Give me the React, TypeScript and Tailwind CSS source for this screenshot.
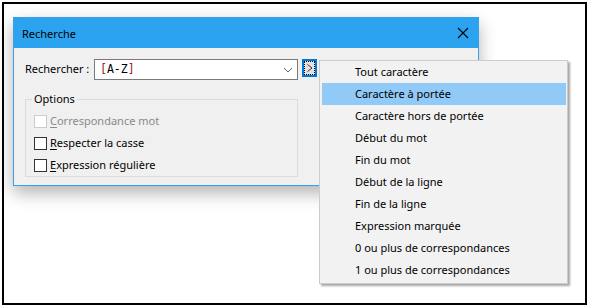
import React from "react";

const MENU_ITEMS = [
  "Tout caractère",
  "Caractère à portée",
  "Caractère hors de portée",
  "Début du mot",
  "Fin du mot",
  "Début de la ligne",
  "Fin de la ligne",
  "Expression marquée",
  "0 ou plus de correspondances",
  "1 ou plus de correspondances",
];

function Checkbox({ label, accel, disabled }: { label: string; accel: string; disabled?: boolean }) {
  return (
    <div className="flex items-center h-[22px]">
      <span
        className={`w-[13px] h-[13px] border bg-white shrink-0 ${disabled ? "border-[#cccccc]" : "border-[#333333]"}`}
      />
      <span className={`ml-[3px] whitespace-nowrap ${disabled ? "text-[#8a8a8a]" : "text-black"}`}>
        <span className="underline underline-offset-2">{accel}</span>
        {label}
      </span>
    </div>
  );
}

export default function App() {
  return (
    <div
      className="w-[589px] h-[307px] bg-white relative overflow-hidden text-[11px] text-black"
      style={{ fontFamily: "'Noto Sans', 'Open Sans', sans-serif" }}
    >
      <div className="absolute left-[2px] top-[2px] w-[585px] h-[303px] border-2 border-black" />

      {/* dialog */}
      <div className="absolute left-[13px] top-[17px] w-[466px] h-[169px] bg-[#f0f0f0] border border-[#3a9fe8] shadow-[0_7px_16px_rgba(0,0,0,0.3)] flex flex-col">
        <div className="h-[30px] bg-[#2ba3ef] flex items-center justify-between pl-[8px] pr-[9px] shrink-0">
          <span className="leading-none">Recherche</span>
          <svg width="12" height="12" viewBox="0 0 12 12">
            <path d="M1 1L11 11M11 1L1 11" stroke="#000" strokeWidth="1.1" />
          </svg>
        </div>
        <div className="flex flex-col pl-[11px] pt-[11px]">
          <div className="flex items-center h-[21px]">
            <span className="w-[69px] shrink-0 whitespace-nowrap">Rechercher :</span>
            <div className="w-[204px] h-[21px] shrink-0 bg-white border border-[#7a7a7a] flex items-center justify-between pl-[5px] pr-[4px]">
              <span
                className="text-[11.5px] leading-none"
                style={{ fontFamily: "'DejaVu Sans Mono', 'Liberation Mono', monospace" }}
              >
                <span className="text-[#9b1c1c]">[</span>A-Z<span className="text-[#9b1c1c]">]</span>
              </span>
              <svg width="10" height="6" viewBox="0 0 10 6">
                <path d="M1 1L5 5L9 1" stroke="#606060" strokeWidth="1" fill="none" />
              </svg>
            </div>
            <div className="ml-[4px] self-start w-[15px] h-[18px] shrink-0 border-2 border-[#0078d7] bg-[#e1e1e1] flex items-center justify-center">
              <div className="w-[11px] h-[14px] border border-dotted border-black flex items-center justify-center">
                <svg width="6" height="8" viewBox="0 0 6 8">
                  <path d="M0.5 0.5L5 4L0.5 7.5" stroke="#5a2a10" strokeWidth="1" fill="none" />
                </svg>
              </div>
            </div>
          </div>
          <div className="relative mt-[19px] w-[273px] h-[78px] border border-[#dcdcdc] pl-[8px] pt-[10px]">
            <span className="absolute left-[6px] top-[-9px] bg-[#f0f0f0] px-[2px] leading-[16px]">Options</span>
            <Checkbox accel="C" label="orrespondance mot" disabled />
            <Checkbox accel="R" label="especter la casse" />
            <Checkbox accel="E" label="xpression régulière" />
          </div>
        </div>
      </div>

      {/* dropdown menu */}
      <div className="absolute left-[319px] top-[60px] w-[249px] bg-[#f2f2f2] border border-[#cccccc] shadow-[2px_2px_2px_rgba(0,0,0,0.35)] pl-[2px] pr-[1px] pb-[2px]">
        {MENU_ITEMS.map((item, i) => (
          <div
            key={item}
            className={`h-[22px] flex items-center pl-[33px] whitespace-nowrap ${i === 1 ? "bg-[#91c9f7]" : ""}`}
          >
            {item}
          </div>
        ))}
      </div>
    </div>
  );
}
